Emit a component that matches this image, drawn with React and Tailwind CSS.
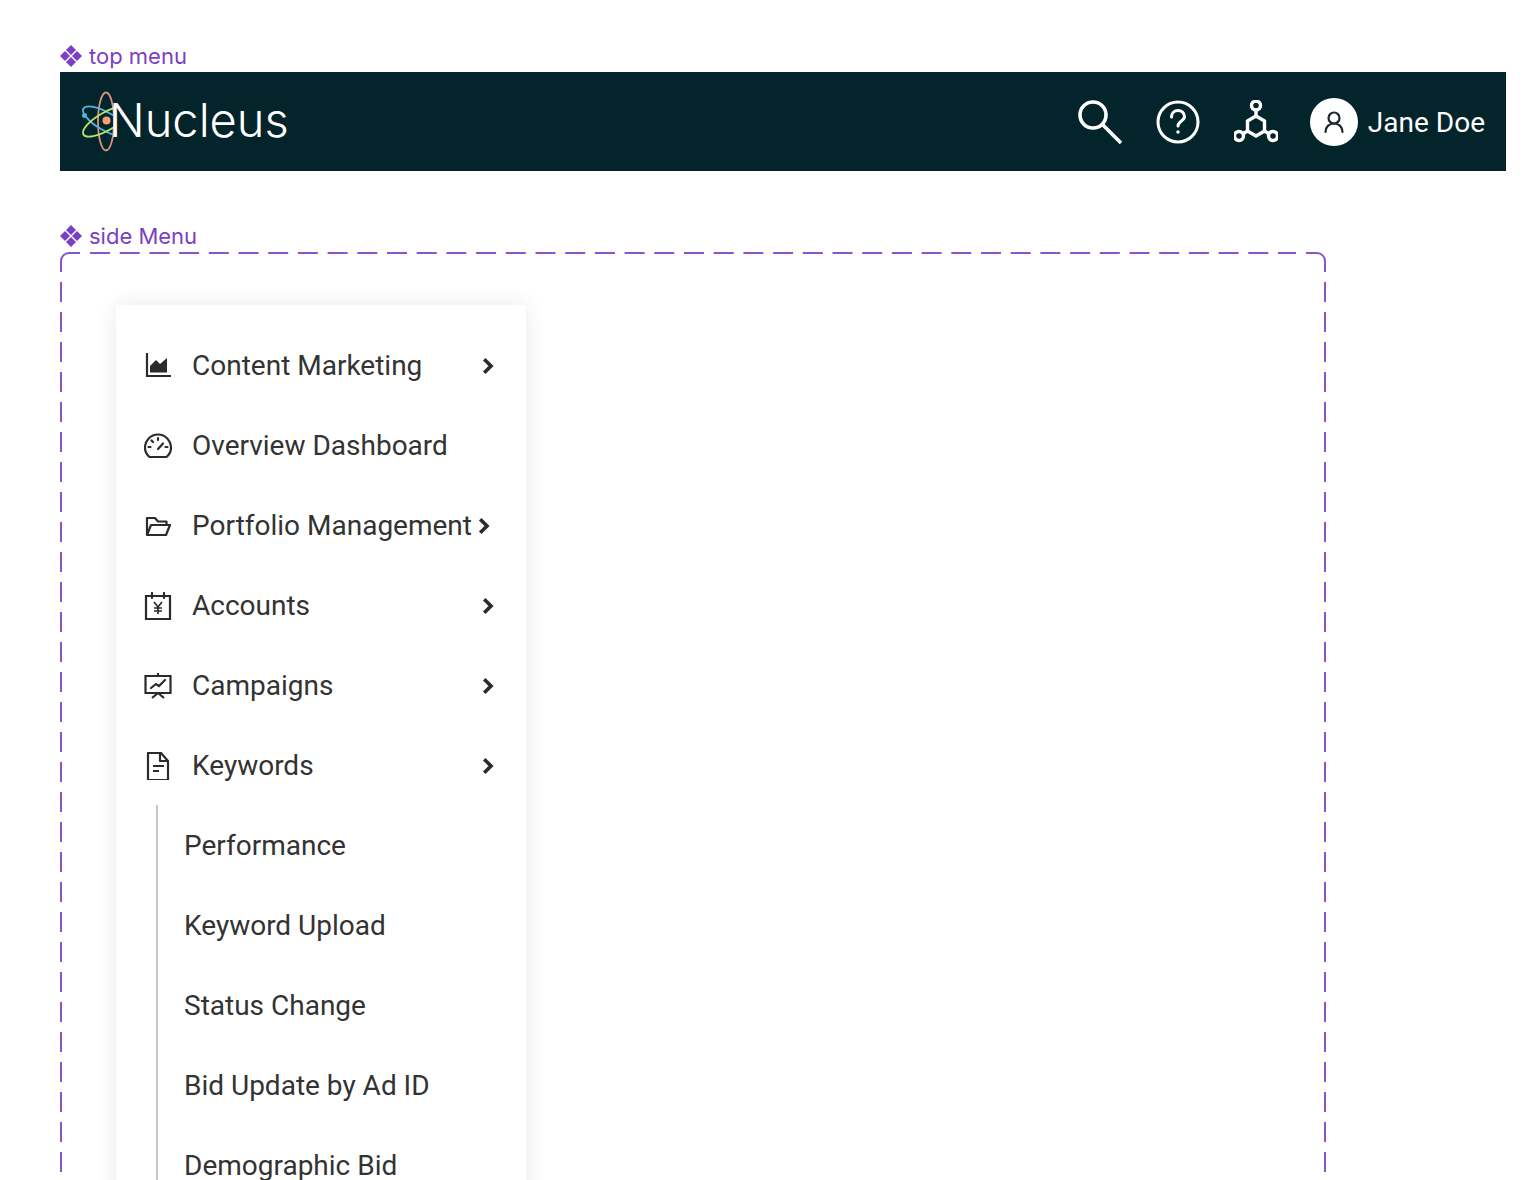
const Diamond = () => (
  <svg width="22" height="22" viewBox="0 0 22 22" fill="#7b3fc4">
    <path d="M11 0l5 5-5 5-5-5z" />
    <path d="M5 6l5 5-5 5-5-5z" />
    <path d="M17 6l5 5-5 5-5-5z" />
    <path d="M11 12l5 5-5 5-5-5z" />
  </svg>
);

const Label = ({ children, className }) => (
  <div className={`flex items-center gap-[7px] h-[24px] text-[22px] leading-[24px] text-[#7b3fc4] font-['Inter',sans-serif] ${className}`}>
    <Diamond />
    <span>{children}</span>
  </div>
);

const Logo = () => (
  <svg width="36" height="62" viewBox="0 0 36 62" fill="none" className="shrink-0">
    <clipPath id="logo-clip">
      <rect x="0" y="0" width="34" height="62" />
    </clipPath>
    <ellipse cx="26" cy="30.500" rx="8" ry="29" stroke="#d9937c" strokeWidth="1.800" />
    <g clipPath="url(#logo-clip)">
      <ellipse cx="26" cy="30.500" rx="26" ry="9" transform="rotate(30 26 30.500)" stroke="#4fb8dc" strokeWidth="1.800" />
      <ellipse cx="26" cy="30.500" rx="26" ry="9" transform="rotate(-30 26 30.500)" stroke="#b7e36a" strokeWidth="1.800" />
    </g>
    <circle cx="26.500" cy="29.500" r="4" fill="#f2a274" />
    <circle cx="4.500" cy="24.500" r="2.500" fill="#4fb8dc" />
  </svg>
);

const SearchIcon = () => (
  <svg width="44" height="44" viewBox="0 0 44 44" fill="none" stroke="white" strokeWidth="3.600">
    <circle cx="15" cy="15" r="13" />
    <path d="M25 25l18 18" />
  </svg>
);

const HelpIcon = () => (
  <svg width="44" height="44" viewBox="0 0 44 44" fill="none" stroke="white" strokeWidth="3" strokeLinecap="round">
    <circle cx="22" cy="22" r="20" />
    <path d="M15.500 17c0-4 3-6.500 6.500-6.500s6.500 2.500 6.500 6c0 4.500-6.500 4.500-6.500 9.500" />
    <circle cx="22" cy="32" r="1" fill="white" strokeWidth="1.500" />
  </svg>
);

const NetworkIcon = () => (
  <svg width="44" height="44" viewBox="0 0 44 44" fill="none" stroke="white" strokeWidth="3.400">
    <circle cx="22" cy="5.500" r="4.500" />
    <circle cx="5" cy="36" r="4.500" />
    <circle cx="39" cy="36" r="4.500" />
    <path d="M22 10v6M22 16l8.500 5v10l-8.500 5-8.500-5V21zM13.500 31l-5 3M30.500 31l5 3" strokeLinejoin="round" />
  </svg>
);

const UserIcon = () => (
  <svg width="24" height="24" viewBox="0 0 24 24" fill="none" stroke="#1f2a2e" strokeWidth="2.200" strokeLinecap="round">
    <circle cx="12" cy="8" r="5.500" />
    <path d="M3.500 22c0-5 3.500-8.500 8.500-8.500s8.500 3.500 8.500 8.500" />
  </svg>
);

const ChartIcon = () => (
  <svg width="28" height="28" viewBox="0 0 28 28" fill="none">
    <path d="M3 1v23h24" stroke="#2b2b2b" strokeWidth="2.200" />
    <path d="M6 20.500V14l6-6 4 4 7-6v14.500z" fill="#2b2b2b" />
  </svg>
);

const GaugeIcon = () => (
  <svg width="28" height="28" viewBox="0 0 28 28" fill="none" stroke="#2b2b2b" strokeWidth="2.200" strokeLinecap="round">
    <path d="M5.500 25C2.500 22.500 1 19.500 1 16 1 8.500 6.500 2.500 14 2.500S27 8.500 27 16c0 3.500-1.500 6.500-4.500 9z" />
    <path d="M14 6v2M7.500 8.500l1.500 1.500M4.500 15h2M21.500 15h2M14 17l5-5.500" />
  </svg>
);

const FolderIcon = () => (
  <svg width="28" height="28" viewBox="0 0 28 28" fill="none" stroke="#2b2b2b" strokeWidth="2.200" strokeLinejoin="round">
    <path d="M3 23V6h8l3 3.500h8.500V13" />
    <path d="M3 23l4-10h19l-4 10z" />
  </svg>
);

const CalendarIcon = () => (
  <svg width="28" height="28" viewBox="0 0 28 28" fill="none" stroke="#2b2b2b" strokeWidth="2.200">
    <path d="M2 4h24v23H2z" />
    <path d="M8 1v5M20 1v5" strokeLinecap="round" />
    <path d="M10 10l4 5 4-5M14 15v7M10 16h8M10 19h8" strokeWidth="1.700" />
  </svg>
);

const PresentationIcon = () => (
  <svg width="28" height="28" viewBox="0 0 28 28" fill="none" stroke="#2b2b2b" strokeWidth="2.200">
    <path d="M1.500 4h25v17h-25z" />
    <path d="M14 1v3" />
    <path d="M7 16l5-4 3 2 6-6" strokeLinecap="round" />
    <path d="M14 21l-6 5M14 21l6 5" />
  </svg>
);

const FileIcon = () => (
  <svg width="28" height="28" viewBox="0 0 28 28" fill="none" stroke="#2b2b2b" strokeWidth="2.200" strokeLinejoin="round">
    <path d="M4 1h13l7 8v19H4z" />
    <path d="M16 1v8h8" />
    <path d="M9 14h11M9 19h6" />
  </svg>
);

const Chevron = ({ className }) => (
  <svg width="24" height="24" viewBox="0 0 24 24" fill="none" stroke="#2b2b2b" strokeWidth="3.600" strokeLinecap="square" className={`shrink-0 ${className || ""}`}>
    <path d="M9.500 6.500l5.500 5.500-5.500 5.500" />
  </svg>
);

const items = [
  { label: "Content Marketing", icon: <ChartIcon />, more: true },
  { label: "Overview Dashboard", icon: <GaugeIcon /> },
  { label: "Portfolio Management", icon: <FolderIcon />, more: true, shift: "-translate-x-1" },
  { label: "Accounts", icon: <CalendarIcon />, more: true },
  { label: "Campaigns", icon: <PresentationIcon />, more: true },
  { label: "Keywords", icon: <FileIcon />, more: true },
];

const subItems = ["Performance", "Keyword Upload", "Status Change", "Bid Update by Ad ID", "Demographic Bid"];

const DashedFrame = () => (
  <svg className="absolute left-0 top-0 w-full h-[1000px] pointer-events-none" fill="none" stroke="#8a55c7" strokeWidth="2">
    <path d="M1 20V9a8 8 0 0 1 8-8h11" />
    <path d="M1265 20V9a8 8 0 0 0-8-8h-11" />
    <path d="M30 1H1236" strokeDasharray="20 9.700" />
    <path d="M1 30V1000" strokeDasharray="20 10" />
    <path d="M1265 30V1000" strokeDasharray="20 10" />
  </svg>
);

export default function App() {
  return (
    <div className="h-[1180px] overflow-hidden bg-white pl-[60px] pt-[44px] font-['Roboto',sans-serif]">
      <Label>top menu</Label>
      <header className="mt-[4px] w-[1446px] h-[99px] bg-[#03242b] flex items-center justify-between pl-[20px] pr-[21px]">
        <div className="flex items-center">
          <Logo />
          <span className="-ml-[7px] -mt-[4px] text-[47px] leading-none font-light text-white font-['Inter',sans-serif]">Nucleus</span>
        </div>
        <div className="flex items-center">
          <SearchIcon />
          <div className="ml-[34px]"><HelpIcon /></div>
          <div className="ml-[34px]"><NetworkIcon /></div>
          <div className="ml-[32px] w-[48px] h-[48px] rounded-full bg-white flex items-center justify-center"><UserIcon /></div>
          <span className="ml-[10px] mt-[2px] text-[28px] leading-none text-white">Jane Doe</span>
        </div>
      </header>

      <Label className="mt-[53px]">side Menu</Label>
      <div className="relative mt-[4px] w-[1266px] h-[1000px] pl-[56px] pt-[53px]">
        <DashedFrame />
        <nav className="w-[410px] h-[1000px] bg-white shadow-[0_0_20px_rgba(0,0,0,0.09)] pt-[21px] pl-[28px] pr-[26px] text-[#333333] text-[28px] leading-[34px]">
          {items.map((item) => (
            <div key={item.label} className="h-[80px] flex items-center">
              <div className="w-[28px] h-[28px] shrink-0">{item.icon}</div>
              <span className="ml-[20px] flex-1 whitespace-nowrap min-w-0">{item.label}</span>
              {item.more && <Chevron className={item.shift} />}
            </div>
          ))}
          <div className="-mt-px pt-px ml-[12px] border-l-2 border-[#c6c6c6] pl-[26px]">
            {subItems.map((label) => (
              <div key={label} className="h-[80px] flex items-center">{label}</div>
            ))}
          </div>
        </nav>
      </div>
    </div>
  );
}
